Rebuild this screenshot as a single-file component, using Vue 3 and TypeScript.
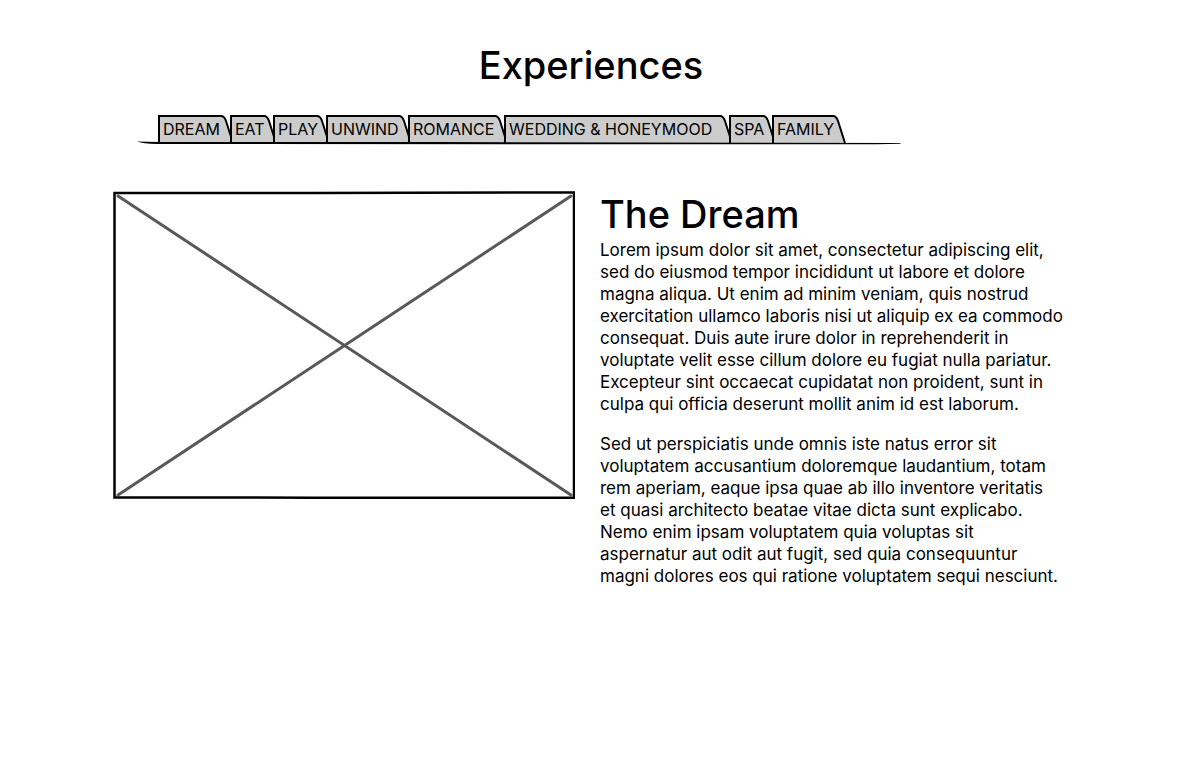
<script setup lang="ts">
import { ref } from 'vue'

interface Tab {
  label: string
  width: number
}

const tabs: Tab[] = [
  { label: 'DREAM', width: 77 },
  { label: 'EAT', width: 48 },
  { label: 'PLAY', width: 58 },
  { label: 'UNWIND', width: 87 },
  { label: 'ROMANCE', width: 101 },
  { label: 'WEDDING & HONEYMOOD', width: 230 },
  { label: 'SPA', width: 48 },
  { label: 'FAMILY', width: 75 },
]

const current = ref('DREAM')

const paragraphs: string[] = [
  `Lorem ipsum dolor sit amet, consectetur adipiscing elit,
sed do eiusmod tempor incididunt ut labore et dolore
magna aliqua. Ut enim ad minim veniam, quis nostrud
exercitation ullamco laboris nisi ut aliquip ex ea commodo
consequat. Duis aute irure dolor in reprehenderit in
voluptate velit esse cillum dolore eu fugiat nulla pariatur.
Excepteur sint occaecat cupidatat non proident, sunt in
culpa qui officia deserunt mollit anim id est laborum.`,
  `Sed ut perspiciatis unde omnis iste natus error sit
voluptatem accusantium doloremque laudantium, totam
rem aperiam, eaque ipsa quae ab illo inventore veritatis
et quasi architecto beatae vitae dicta sunt explicabo.
Nemo enim ipsam voluptatem quia voluptas sit
aspernatur aut odit aut fugit, sed quia consequuntur
magni dolores eos qui ratione voluptatem sequi nesciunt.`,
]
</script>

<template>
  <main class="page">
    <h1 class="title">Experiences</h1>

    <nav class="tabs" role="tablist" aria-label="Experiences">
      <button
        v-for="tab in tabs"
        :key="tab.label"
        class="tab"
        type="button"
        role="tab"
        :aria-selected="current === tab.label"
        :style="{ width: tab.width + 'px' }"
        @click="current = tab.label"
      >
        <span class="label">{{ tab.label }}</span>
        <svg class="slant" viewBox="0 0 15 29" aria-hidden="true">
          <path class="fill" d="M0 1H1C4 1 5 3 6 6L13 28H0Z" />
          <path class="edge" d="M0 1H1C4 1 5 3 6 6L13 28" />
        </svg>
      </button>
      <svg class="baseline" viewBox="0 0 764 4" preserveAspectRatio="none" aria-hidden="true">
        <path d="M0 .5L22 1H300L764 2L763 2.7L740 3.3H500L20 3Q6 2.6 0 .5Z" />
      </svg>
    </nav>

    <section class="content">
      <svg class="picture" viewBox="0 0 462 308" preserveAspectRatio="none" role="img" aria-label="Image placeholder">
        <path class="cross" d="M5 5L458 304M458 5L5 304" />
        <path class="frame" d="M1.5 2L200 2L461 1.4V306.7H200L1.5 306.4Z" />
      </svg>
      <article>
        <h2 class="heading">The Dream</h2>
        <p v-for="(text, i) in paragraphs" :key="i" class="text">{{ text }}</p>
      </article>
    </section>
  </main>
</template>

<style>
body {
  margin: 0;
  background: #fff;
}
</style>

<style scoped>
.page {
  box-sizing: border-box;
  max-width: 956px;
  margin: 0 auto;
  padding-top: 40px;
  color: #000;
  font-family: Inter, "Open Sans", sans-serif;
}

.title {
  margin: 0;
  font-size: 38px;
  font-weight: 500;
  line-height: 50px;
  text-align: center;
}

.tabs {
  position: relative;
  display: flex;
  width: 764px;
  max-width: 100%;
  box-sizing: border-box;
  margin: 25px 0 0 24px;
  padding-left: 21px;
}

.tab {
  display: flex;
  flex: none;
  height: 29px;
  margin: 0 -5px 0 0;
  padding: 0;
  border: 0;
  background: none;
  color: #000;
  font: inherit;
  font-size: 16px;
  cursor: pointer;
}

.label {
  z-index: 1;
  flex: 1;
  min-width: 0;
  box-sizing: border-box;
  height: 29px;
  padding-left: 3px;
  border: solid #000;
  border-width: 2px 0 0 2px;
  background: #ccc;
  line-height: 25px;
  text-align: left;
  white-space: nowrap;
}

.slant {
  flex: none;
  width: 15px;
  height: 29px;
}

.fill {
  fill: #ccc;
}

.edge {
  fill: none;
  stroke: #000;
  stroke-width: 2;
}

.baseline {
  position: absolute;
  z-index: 2;
  left: 0;
  bottom: -1px;
  width: 100%;
  height: 4px;
}

.content {
  display: grid;
  grid-template-columns: 462fr 469fr;
  gap: 25px;
  align-items: start;
  margin-top: 47px;
}

.picture {
  display: block;
  width: 100%;
}

.frame {
  fill: none;
  stroke: #000;
  stroke-width: 2.5;
}

.cross {
  fill: none;
  stroke: #595959;
  stroke-width: 3;
  stroke-linecap: round;
}

.heading {
  margin: 0 0 2px;
  font-size: 38px;
  font-weight: 500;
  line-height: 46px;
}

.text {
  margin: 0 0 18px;
  font-size: 17px;
  line-height: 22px;
  white-space: pre-line;
}
</style>
